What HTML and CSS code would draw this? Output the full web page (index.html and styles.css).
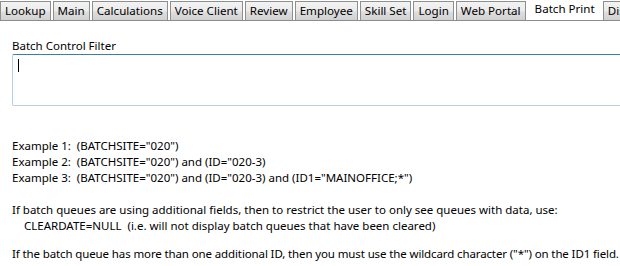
FILE: index.html
```html
<!DOCTYPE html>
<html lang="en">
<head>
  <meta charset="UTF-8" />
  <title>Batch Print</title>
  <link rel="stylesheet" href="styles.css">
</head>
<body>
  <nav class="tabs">
    <span class="tab">Lookup</span>
    <span class="tab">Main</span>
    <span class="tab">Calculations</span>
    <span class="tab">Voice Client</span>
    <span class="tab">Review</span>
    <span class="tab">Employee</span>
    <span class="tab">Skill Set</span>
    <span class="tab">Login</span>
    <span class="tab">Web Portal</span>
    <span class="tab active">Batch Print</span>
    <span class="tab">Disposition</span>
  </nav>

  <main class="panel">
    <label class="field-label" for="filter">Batch Control Filter</label>
    <div class="filter-box">
      <span class="caret"></span>
    </div>

    <div class="help">
      <p>Example 1:&nbsp; (BATCHSITE="020")<br>
      Example 2:&nbsp; (BATCHSITE="020") and (ID="020-3)<br>
      Example 3:&nbsp; (BATCHSITE="020") and (ID="020-3) and (ID1="MAINOFFICE;*")</p>

      <p>If batch queues are using additional fields, then to restrict the user to only see queues with data, use:<br>
      <span class="indent">CLEARDATE=NULL&nbsp; (i.e. will not display batch queues that have been cleared)</span></p>

      <p class="note">If the batch queue has more than one additional ID, then you must use the wildcard character ("*") on the ID1 field.</p>
    </div>
  </main>
</body>
</html>
```

FILE: styles.css
```css
* {
  margin: 0;
  padding: 0;
  box-sizing: border-box;
}

body {
  width: 620px;
  height: 266px;
  overflow: hidden;
  background: #ffffff;
  color: #000000;
  font-family: "Noto Sans", "Open Sans", sans-serif;
  font-size: 11.5px;
}

.tabs {
  display: flex;
  gap: 2px;
  height: 21px;
  border-bottom: 1px solid #898c95;
  white-space: nowrap;
  overflow: hidden;
}

.tab {
  flex: none;
  height: 20px;
  margin-top: 1px;
  padding: 0 4px;
  font-size: 11.6px;
  line-height: 18px;
  border: 1px solid #8e8f8f;
  border-bottom: none;
  background: linear-gradient(#f3f3f3 0%, #ebebeb 45%, #dddddd 55%, #cfcfcf 100%);
}

.tab.active {
  height: 21px;
  margin: 0 -1px -1px 0;
  padding: 0 6px;
  line-height: 16px;
  border-color: #ffffff;
  background: #ffffff;
}

.panel {
  padding: 17px 0 0 12px;
}

.field-label {
  display: block;
  line-height: 15px;
}

.filter-box {
  height: 52px;
  margin-top: 1px;
  border: 1px solid #b5cfe7;
  border-top-color: #3d7bad;
  border-right: none;
  border-radius: 2px 0 0 2px;
  padding: 4px 0 0 5px;
}

.caret {
  display: block;
  width: 1px;
  height: 13px;
  background: #000000;
}

.help {
  margin-top: 32px;
  line-height: 16px;
}

.help p {
  margin-bottom: 16px;
}

.help .note {
  margin-top: -4px;
  white-space: nowrap;
  letter-spacing: -0.12px;
}

.indent {
  padding-left: 12px;
}
```
